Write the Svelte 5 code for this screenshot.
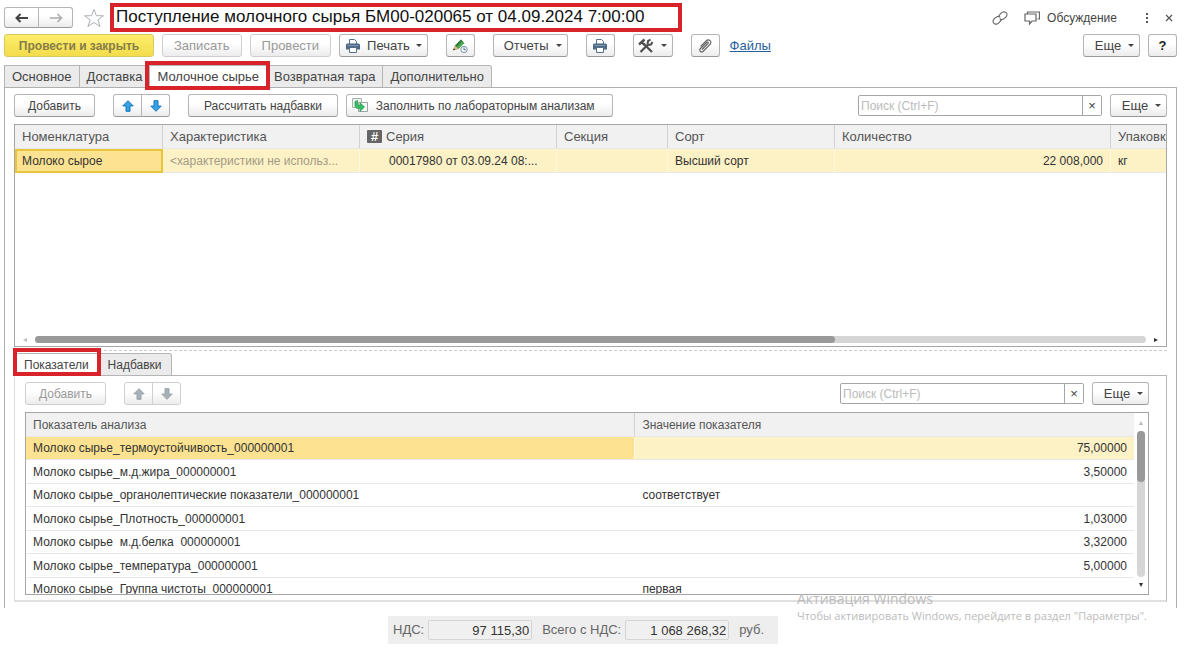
<script lang="ts">
    type Indicator = { name: string; text?: string; value?: string };

    const indicators: Indicator[] = [
        { name: 'Молоко сырье_термоустойчивость_000000001', value: '75,00000' },
        { name: 'Молоко сырье_м.д.жира_000000001', value: '3,50000' },
        { name: 'Молоко сырье_органолептические показатели_000000001', text: 'соответствует' },
        { name: 'Молоко сырье_Плотность_000000001', value: '1,03000' },
        { name: 'Молоко сырье\u00a0\u00a0м.д.белка\u00a0\u00a0000000001', value: '3,32000' },
        { name: 'Молоко сырье_температура_000000001', value: '5,00000' },
        { name: 'Молоко сырье\u00a0\u00a0Группа чистоты\u00a0\u00a0000000001', text: 'первая' }
    ];

    const tabs = ['Основное', 'Доставка', 'Молочное сырье', 'Возвратная тара', 'Дополнительно'];
    const subTabs = ['Показатели', 'Надбавки'];

    let activeTab = $state('Молочное сырье');
    let activeSubTab = $state('Показатели');
    let selected = $state(0);
    let search = $state('');
    let subSearch = $state('');
</script>

{#snippet printer()}
    <svg width="16" height="14" viewBox="0 0 16 14" aria-hidden="true">
        <path d="M4.500 5V.5h5l2 2V5" fill="#fff" stroke="#56708c" />
        <path d="M2.500 4.500h11q1.500 0 1.500 1.500v4.500H1V6q0-1.500 1.500-1.500z" fill="#4b6885" />
        <path d="M2.500 6.500h11" stroke="#8299b0" />
        <path d="M4.500 8.500h7v5h-7z" fill="#fff" stroke="#56708c" />
    </svg>
{/snippet}

{#snippet arrow(down: boolean)}
    <svg class="arrow" class:arrow--down={down} width="12" height="12" viewBox="0 0 12 12" aria-hidden="true">
        <path d="M6 .7l5.200 5.200H8v5.400H4V5.900H.8z" />
    </svg>
{/snippet}

{#snippet searchBox(label: string, value: string, onchange: (v: string) => void)}
    <div class="search">
        <input
            type="text"
            aria-label={label}
            placeholder="Поиск (Ctrl+F)"
            {value}
            oninput={(e) => onchange(e.currentTarget.value)}
        />
        <button type="button" aria-label="Очистить" onclick={() => onchange('')}>×</button>
    </div>
{/snippet}

<div class="page">
    <header class="title-bar">
        <div class="group nav">
            <button class="btn" type="button" aria-label="Назад">
                <svg width="14" height="10" viewBox="0 0 14 10" fill="none" stroke="#444" stroke-width="2">
                    <path d="M13 5H2M5.500 1L1.500 5l4 4" />
                </svg>
            </button>
            <button class="btn" type="button" aria-label="Вперед">
                <svg width="14" height="10" viewBox="0 0 14 10" fill="none" stroke="#aaa" stroke-width="1.500">
                    <path d="M1 5h11M8.500 1l4 4-4 4" />
                </svg>
            </button>
        </div>
        <button class="plain star" type="button" aria-label="В избранное">
            <svg width="22" height="20" viewBox="0 0 22 20" fill="#fff" stroke="#a9b0b5">
                <path d="M11 1.500l2.400 6.200 7 .1-5.500 4.100 2.200 6.600L11 14.500l-6.100 4 2.200-6.600L1.600 7.800l7-.1z" />
            </svg>
        </button>
        <h1>Поступление молочного сырья БМ00-020065 от 04.09.2024 7:00:00</h1>
        <div class="window-tools">
            <button class="plain" type="button" aria-label="Ссылка">
                <svg width="16" height="14" viewBox="0 0 16 14" fill="none" stroke="#666" stroke-width="1.100">
                    <path d="M6.500 6C7 4 9.500 1.500 11 1s4 .5 4 2.500-2.500 4-4 4.800-2.700.2-3.200-.8" />
                    <path d="M9.500 8C9 10 6.500 12.500 5 13s-4-.5-4-2.500 2.500-4 4-4.800 2.700-.2 3.200.8" />
                </svg>
            </button>
            <button class="plain discuss" type="button">
                <svg width="16" height="14" viewBox="0 0 16 14" fill="none" stroke="#666" stroke-width="1.200">
                    <path d="M3.500 3V1h12v7h-2" />
                    <path d="M1 3h11v7H8l-2.500 3v-3H1z" />
                </svg>
                Обсуждение
            </button>
            <button class="plain" type="button" aria-label="Меню">
                <svg width="4" height="12" viewBox="0 0 4 12" fill="#555">
                    <path d="M1 1h2v2H1zM1 5h2v2H1zM1 9h2v2H1z" />
                </svg>
            </button>
            <button class="plain" type="button" aria-label="Закрыть">
                <svg width="8" height="8" viewBox="0 0 8 8" stroke="#555" stroke-width="1.200">
                    <path d="M1 1l6 6M7 1L1 7" />
                </svg>
            </button>
        </div>
    </header>

    <div class="commands">
        <button class="btn btn--primary" type="button">Провести и закрыть</button>
        <button class="btn btn--muted" type="button">Записать</button>
        <button class="btn btn--muted" type="button">Провести</button>
        <button class="btn btn--print" type="button">{@render printer()}Печать<i class="caret"></i></button>
        <button class="btn btn--icon spaced" type="button" aria-label="Редактировать">
            <svg width="17" height="16" viewBox="0 0 17 16">
                <path d="M1.500 12L3 7.500 9 1.500l3.500 3.500-6 6z" fill="#4ca653" />
                <path d="M3 7.500L9 1.500l1.500 1.500-6 6z" fill="#347b3b" />
                <path d="M1.500 12L3 7.500 6.500 11z" fill="#e3b17b" />
                <path d="M1 12.500l.8-2.300 1.500 1.500z" fill="#333" />
                <circle cx="12" cy="11.500" r="3.200" fill="#eef4f8" stroke="#8096a8" />
                <path d="M12 9.500v2.300h1.800" fill="none" stroke="#60788c" />
            </svg>
        </button>
        <button class="btn btn--reports spaced" type="button">Отчеты<i class="caret"></i></button>
        <button class="btn btn--icon spaced" type="button" aria-label="Печать">{@render printer()}</button>
        <button class="btn btn--tools spaced" type="button" aria-label="Инструменты">
            <svg width="16" height="16" viewBox="0 0 16 16" fill="none" stroke="#4c4c4c">
                <path d="M2.500 14L10 6.500" stroke-width="2.200" />
                <path d="M9.500 6L10 3.200 12.500 1.500M14.500 4L13 6.500l-3 .5" stroke-width="2" />
                <path d="M5.500 5.500l8.500 8.500" stroke-width="2.200" />
                <path d="M1 6.500l5.500-5M3 3.500l3.500 3.500" stroke-width="2.400" />
            </svg>
            <i class="caret"></i>
        </button>
        <button class="btn btn--icon spaced" type="button" aria-label="Вложения">
            <svg width="14" height="14" viewBox="0 0 14 14" fill="none" stroke="#666" stroke-width="1.200">
                <path d="M4 10.500l6-6c.8-.9-.3-2-1.200-1.200L2.500 9.500c-2 2 .6 4.700 2.700 2.700l6.600-6.600c3-3-1-6.400-3.700-3.700L2.600 7.400" />
            </svg>
        </button>
        <a href="#files">Файлы</a>
        <button class="btn btn--more push" type="button">Еще<i class="caret"></i></button>
        <button class="btn btn--icon help" type="button" aria-label="Справка">?</button>
    </div>

    <div class="tabs" role="tablist">
        {#each tabs as tab}
            <button
                class="tab"
                class:tab--active={tab === activeTab}
                type="button"
                role="tab"
                aria-selected={tab === activeTab}
                onclick={() => (activeTab = tab)}
            >
                {tab}
            </button>
        {/each}
    </div>

    <main class="panel">
        <div class="toolbar">
            <button class="btn btn--add" type="button">Добавить</button>
            <div class="group spaced">
                <button class="btn" type="button" aria-label="Вверх">{@render arrow(false)}</button>
                <button class="btn" type="button" aria-label="Вниз">{@render arrow(true)}</button>
            </div>
            <button class="btn btn--calc spaced" type="button">Рассчитать надбавки</button>
            <button class="btn btn--fill" type="button">
                <svg width="16" height="15" viewBox="0 0 16 15">
                    <path d="M.5.500h9v9h-9z" fill="#eef2f0" stroke="#a3b5aa" />
                    <path d="M6.500 4.500h9v9h-9z" fill="#f7f9f8" stroke="#9aa5a0" />
                    <path d="M3 3.500l2.500-1v3.300c0 1 .5 1.500 1.500 1.500h1V4.800L12.500 9 8 13.300v-2.800H6.500C4.200 10.500 3 9.300 3 7z" fill="#35bd66" stroke="#1f9549" stroke-width=".7" />
                </svg>
                Заполнить по лабораторным анализам
            </button>
            <div class="toolbar__right">
                {@render searchBox('Поиск по номенклатуре', search, (v) => (search = v))}
                <button class="btn btn--more" type="button">Еще<i class="caret"></i></button>
            </div>
        </div>

        <div class="grid grid--goods">
            <table>
                <colgroup>
                    <col class="c-name" /><col class="c-char" /><col class="c-char" /><col class="c-section" />
                    <col class="c-sort" /><col class="c-qty" /><col />
                </colgroup>
                <thead>
                    <tr>
                        <th>Номенклатура</th>
                        <th>Характеристика</th>
                        <th class="with-hash"><span class="hash">#</span>Серия</th>
                        <th>Секция</th>
                        <th>Сорт</th>
                        <th>Количество</th>
                        <th>Упаковка</th>
                    </tr>
                </thead>
                <tbody>
                    <tr class="selected">
                        <td class="current">Молоко сырое</td>
                        <td class="dim">&lt;характеристики не использ...</td>
                        <td class="series">00017980 от 03.09.24 08:...</td>
                        <td></td>
                        <td>Высший сорт</td>
                        <td class="num">22 008,000</td>
                        <td>кг</td>
                    </tr>
                </tbody>
            </table>
            <div class="hscroll">
                <span class="tri tri--left"></span>
                <div class="hscroll__track"><div class="hscroll__thumb"></div></div>
                <span class="tri tri--right"></span>
            </div>
        </div>

        <div class="splitter"></div>

        <div class="tabs tabs--sub" role="tablist">
            {#each subTabs as tab}
                <button
                    class="tab"
                    class:tab--active={tab === activeSubTab}
                    type="button"
                    role="tab"
                    aria-selected={tab === activeSubTab}
                    onclick={() => (activeSubTab = tab)}
                >
                    {tab}
                </button>
            {/each}
        </div>

        <section class="subpanel">
            <div class="toolbar">
                <button class="btn btn--add btn--muted" type="button">Добавить</button>
                <div class="group group--muted spaced">
                    <button class="btn" type="button" aria-label="Вверх">{@render arrow(false)}</button>
                    <button class="btn" type="button" aria-label="Вниз">{@render arrow(true)}</button>
                </div>
                <div class="toolbar__right">
                    {@render searchBox('Поиск по показателям', subSearch, (v) => (subSearch = v))}
                    <button class="btn btn--more" type="button">Еще<i class="caret"></i></button>
                </div>
            </div>

            <div class="grid grid--indicators">
                <table>
                    <colgroup><col class="c-indicator" /><col /></colgroup>
                    <thead>
                        <tr>
                            <th>Показатель анализа</th>
                            <th>Значение показателя</th>
                        </tr>
                    </thead>
                    <tbody>
                        {#each indicators as row, i}
                            <tr class:selected={i === selected} onclick={() => (selected = i)}>
                                <td class:fill={i === selected}>{row.name}</td>
                                <td class:num={row.value}>{row.value ?? row.text}</td>
                            </tr>
                        {/each}
                    </tbody>
                </table>
                <div class="vscroll">
                    <span class="tri tri--up"></span>
                    <div class="vscroll__track"><div class="vscroll__thumb"></div></div>
                    <span class="tri tri--down"></span>
                </div>
            </div>
        </section>
    </main>

    <footer class="totals">
        <label for="vat">НДС:</label>
        <input id="vat" type="text" value="97 115,30" readonly />
        <label for="total">Всего с НДС:</label>
        <input id="total" type="text" value="1 068 268,32" readonly />
        <span>руб.</span>
    </footer>

    <div class="watermark">
        <strong>Активация Windows</strong>
        <span>Чтобы активировать Windows, перейдите в раздел "Параметры".</span>
    </div>
</div>

<style>
    :global(body) {
        background: #fff;
    }

    .page {
        position: relative;
        padding: 3px 12px 9px 4px;
        color: #444;
        font-family: "Liberation Sans", Arial, sans-serif;
        font-size: 13px;
        line-height: 16px;
    }

    .page * {
        box-sizing: border-box;
    }

    button,
    input {
        font: inherit;
        color: inherit;
    }

    .btn {
        display: flex;
        align-items: center;
        justify-content: center;
        flex: none;
        height: 23px;
        padding: 0 11px;
        border: 1px solid #b5b5b5;
        border-bottom-color: #999;
        border-radius: 3px;
        background: linear-gradient(#fff 40%, #ececec);
        white-space: nowrap;
    }

    .btn--muted {
        border-color: #cfcfcf;
        color: #999;
    }

    .btn--primary {
        width: 150px;
        padding: 0;
        border-color: #d8c95e;
        background: linear-gradient(#fdee6c, #f3dc4c);
        color: #857d4a;
        font-size: 12px;
        font-weight: bold;
    }

    .btn--icon {
        width: 29px;
        padding: 0;
    }

    .btn--print {
        gap: 6px;
        padding: 0 5px;
    }

    .btn--reports {
        padding: 0 5px 0 10px;
    }

    .btn--calc {
        padding: 0 15px;
        font-size: 12px;
    }

    .btn--fill {
        gap: 8px;
        padding: 0 17px 0 5px;
        font-size: 12px;
    }

    .btn--tools {
        width: 40px;
        padding: 0;
    }

    .btn--more {
        width: 57px;
        padding: 0 0 0 6px;
    }

    .btn--add {
        width: 81px;
        padding: 0;
        font-size: 12px;
    }

    .caret {
        margin-left: 7px;
        border: 3px solid transparent;
        border-top-color: #444;
        border-bottom: 0;
    }

    .btn--print .caret {
        margin-left: 0;
    }

    .plain {
        display: flex;
        align-items: center;
        gap: 7px;
        padding: 0;
        border: 0;
        background: none;
    }

    .group {
        display: flex;
    }

    .group .btn {
        width: 29px;
        padding: 0;
    }

    .group .btn:first-child {
        border-radius: 3px 0 0 3px;
    }

    .group .btn:last-child {
        margin-left: -1px;
        border-radius: 0 3px 3px 0;
    }

    .group.nav .btn {
        width: 35px;
        height: 21px;
    }

    .arrow {
        fill: #35a3e8;
        stroke: #1673b5;
    }

    .arrow--down {
        transform: rotate(180deg);
    }

    .group--muted .btn {
        border-color: #cfcfcf;
    }

    .group--muted .arrow {
        fill: #a8b1b7;
        stroke: #98a3aa;
    }

    .title-bar {
        display: flex;
        align-items: center;
    }

    .star {
        margin: 0 5px 0 10px;
    }

    h1 {
        width: 572px;
        height: 29px;
        margin: 0;
        padding: 0 2px;
        border: 4px solid #d8232a;
        color: #111;
        font-size: 17px;
        font-weight: normal;
        line-height: 20px;
        white-space: nowrap;
    }

    .window-tools {
        display: flex;
        align-items: center;
        margin-left: auto;
        padding-right: 4px;
        gap: 16px;
    }

    .discuss {
        margin-right: 12px;
        font-size: 12px;
    }

    .commands {
        display: flex;
        align-items: center;
        gap: 8px;
        margin-top: 2px;
    }

    .spaced {
        margin-left: 10px;
    }

    .push {
        margin-left: auto;
    }

    .help {
        color: #222;
        font-weight: bold;
    }

    a {
        margin-left: 2px;
        color: #2a5f9e;
    }

    .tabs {
        display: flex;
        margin-top: 8px;
    }

    .tab {
        position: relative;
        height: 22px;
        margin-right: -1px;
        padding: 0 7px;
        border: 1px solid #b5b5b5;
        border-bottom: 0;
        background: #ebebeb;
        white-space: nowrap;
    }

    .tab:last-child {
        border-radius: 0 3px 0 0;
    }

    .tab--active {
        z-index: 1;
        margin-bottom: -1px;
        background: #fff;
    }

    /* red frame round the current tab */
    .tab--active::after {
        content: "";
        position: absolute;
        inset: -5px -4px -3px -5px;
        border: 4px solid #d8232a;
    }

    .panel {
        padding: 6px 9px 6px;
        border: 1px solid #b0b0b0;
        border-bottom: 0;
    }

    .toolbar {
        display: flex;
        align-items: center;
        gap: 8px;
    }

    .toolbar__right {
        display: flex;
        align-items: center;
        gap: 8px;
        margin-left: auto;
    }

    .search {
        display: flex;
        width: 244px;
        height: 21px;
        border: 1px solid #a6a6a6;
        border-radius: 2px;
    }

    .search input {
        flex: 1;
        min-width: 0;
        padding: 0 2px;
        border: 0;
        background: none;
        outline: none;
        font-size: 12px;
    }

    .search input::placeholder {
        color: #bbb;
        opacity: 1;
    }

    .search button {
        width: 19px;
        padding: 0;
        border: 0;
        border-left: 1px solid #a6a6a6;
        background: #fff;
    }

    .grid {
        overflow: hidden;
        margin-top: 7px;
        border: 1px solid #a6a6a6;
    }

    table {
        width: 100%;
        border-collapse: separate;
        border-spacing: 0;
        table-layout: fixed;
    }

    th,
    td {
        height: 24px;
        padding: 0 7px;
        overflow: hidden;
        border-bottom: 1px solid #e8e8e8;
        text-align: left;
        white-space: nowrap;
        line-height: 16px;
    }

    th {
        border-right: 1px solid #d2d2d2;
        background: #f1f1f1;
        color: #555;
        font-weight: normal;
    }

    th:last-child {
        border-right: 0;
    }

    td {
        color: #333;
        font-size: 12px;
    }

    .num {
        text-align: right;
    }

    .selected td {
        border-right: 1px solid #fff8e0;
        background: #fdf1c6;
    }

    .selected td:last-child {
        border-right: 0;
    }

    .selected .fill {
        background: #fde391;
    }

    .selected .current {
        padding: 0 5px;
        border: 2px solid #e8c63c;
        background: #fde391;
    }

    .selected .dim {
        color: #a39c83;
    }

    .selected .series {
        padding-left: 29px;
    }

    .hash {
        display: inline-block;
        width: 15px;
        height: 13px;
        margin-right: 4px;
        border-radius: 1px;
        background: #666;
        color: #fff;
        font-weight: bold;
        line-height: 13px;
        text-align: center;
    }

    .c-name {
        width: 148px;
    }

    .c-char {
        width: 197px;
    }

    .c-section {
        width: 111px;
    }

    .c-sort {
        width: 167px;
    }

    .c-qty {
        width: 276px;
    }

    .c-indicator {
        width: 55%;
    }

    .grid--goods {
        display: flex;
        flex-direction: column;
        justify-content: space-between;
        min-height: 223px;
    }

    .hscroll {
        display: flex;
        align-items: center;
        gap: 8px;
        padding: 0 8px 3px;
    }

    .hscroll__track {
        flex: 1;
        height: 7px;
        border-radius: 4px;
        background: #d6d6d6;
    }

    .hscroll__thumb {
        width: 72%;
        height: 7px;
        border-radius: 4px;
        background: #999;
    }

    .tri {
        flex: none;
        border: 2px solid transparent;
    }

    .tri--left {
        border-left: 0;
        border-right: 4px solid #bbb;
    }

    .tri--right {
        border-right: 0;
        border-left: 4px solid #333;
    }

    .tri--up {
        border-top: 0;
        border-bottom: 4px solid #bbb;
    }

    .tri--down {
        border-bottom: 0;
        border-top: 4px solid #333;
    }

    .splitter {
        margin-top: 3px;
        border-top: 1px dashed #ccc;
    }

    .tabs--sub {
        margin-top: 2px;
        font-size: 12px;
    }

    .tabs--sub .tab {
        padding: 0 9px;
    }

    .tabs--sub .tab--active::after {
        inset: -6px -3px -1px -2px;
    }

    .subpanel {
        padding: 6px 17px 5px 10px;
        border: 1px solid #b5b5b5;
        border-bottom: 2px solid #e0e0e0;
        border-left-color: #ddd;
    }

    .grid--indicators {
        display: flex;
        height: 183px;
    }

    .grid--indicators table {
        flex: 1;
        height: 0;
    }

    .grid--indicators th {
        font-size: 12px;
    }

    .grid--indicators tbody tr:nth-child(odd) td {
        height: 23px;
    }

    .vscroll {
        display: flex;
        flex-direction: column;
        align-items: center;
        gap: 6px;
        flex: none;
        width: 14px;
        padding: 8px 0 7px;
    }

    .vscroll__track {
        flex: 1;
        width: 8px;
        border-radius: 4px;
        background: #d6d6d6;
    }

    .vscroll__thumb {
        width: 8px;
        height: 35%;
        border-radius: 4px;
        background: #999;
    }

    .totals {
        display: flex;
        align-items: center;
        width: 390px;
        height: 28px;
        margin: 8px auto 0 384px;
        padding: 0 5px;
        background: #eee;
        color: #666;
    }

    .totals input {
        width: 104px;
        height: 20px;
        margin: 0 10px 0 4px;
        padding: 0 2px;
        border: 1px solid #d5d5d5;
        border-radius: 2px;
        background: #f0f0f0;
        color: #333;
        text-align: right;
    }

    .watermark {
        position: absolute;
        top: 590px;
        right: 42px;
        color: #bbb;
        font-family: "Open Sans", "Noto Sans", sans-serif;
        font-size: 11px;
        pointer-events: none;
    }

    .watermark strong {
        display: block;
        font-size: 14px;
        font-weight: normal;
        line-height: 18px;
    }
</style>
